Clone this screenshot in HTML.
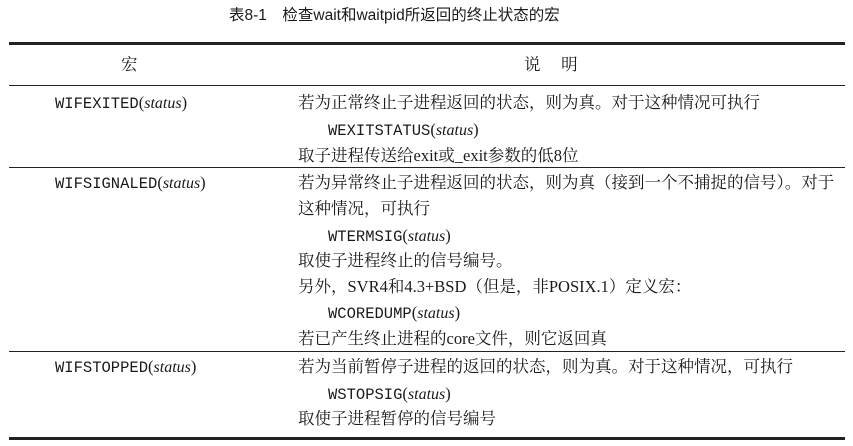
<!DOCTYPE html>
<html><head><meta charset="utf-8"><style>
body{margin:0;width:853px;height:446px;background:#fff;position:relative;overflow:hidden;color:#1a1a1a;font-family:"Liberation Serif","Noto Serif CJK SC",serif;font-size:16.5px}
.t{position:absolute;white-space:nowrap;line-height:19px}
.m{font-family:"Liberation Mono",monospace;font-size:15.5px}
.i{font-style:italic;font-family:"Liberation Serif",serif;font-size:16px}
.s{font-family:"Liberation Sans","Noto Sans CJK SC",sans-serif}
.l{position:absolute;left:9px;width:836px;background:#222}
</style></head><body>
<div class="t s" style="left:229px;top:6px;font-size:15.5px;line-height:20px">表8-1　检查wait和waitpid所返回的终止状态的宏</div>
<div class="l" style="top:42px;height:3px"></div>
<div class="t" style="left:121px;top:55px">宏</div>
<div class="t" style="left:524px;top:55px">说&nbsp;&nbsp;&nbsp;&nbsp;&nbsp;明</div>
<div class="l" style="top:85px;height:1px"></div>

<div class="t" style="left:55px;top:93px"><span class="m">WIFEXITED</span>(<span class="i">status</span>)</div>
<div class="t" style="left:298px;top:93px">若为正常终止子进程返回的状态，则为真。对于这种情况可执行</div>
<div class="t" style="left:328px;top:120px"><span class="m">WEXITSTATUS</span>(<span class="i">status</span>)</div>
<div class="t" style="left:298px;top:146px">取子进程传送给exit或_exit参数的低8位</div>
<div class="l" style="top:167px;height:1px"></div>

<div class="t" style="left:55px;top:173px"><span class="m">WIFSIGNALED</span>(<span class="i">status</span>)</div>
<div class="t" style="left:298px;top:173px">若为异常终止子进程返回的状态，则为真（接到一个不捕捉的信号）。对于</div>
<div class="t" style="left:298px;top:199px">这种情况，可执行</div>
<div class="t" style="left:328px;top:226px"><span class="m">WTERMSIG</span>(<span class="i">status</span>)</div>
<div class="t" style="left:298px;top:251px">取使子进程终止的信号编号。</div>
<div class="t" style="left:298px;top:277px">另外，SVR4和4.3+BSD（但是，非POSIX.1）定义宏：</div>
<div class="t" style="left:328px;top:303px"><span class="m">WCOREDUMP</span>(<span class="i">status</span>)</div>
<div class="t" style="left:298px;top:329px">若已产生终止进程的core文件，则它返回真</div>
<div class="l" style="top:351px;height:1px"></div>

<div class="t" style="left:55px;top:357px"><span class="m">WIFSTOPPED</span>(<span class="i">status</span>)</div>
<div class="t" style="left:298px;top:357px">若为当前暂停子进程的返回的状态，则为真。对于这种情况，可执行</div>
<div class="t" style="left:328px;top:384px"><span class="m">WSTOPSIG</span>(<span class="i">status</span>)</div>
<div class="t" style="left:298px;top:409px">取使子进程暂停的信号编号</div>
<div class="l" style="top:437px;height:3px"></div>
</body></html>
